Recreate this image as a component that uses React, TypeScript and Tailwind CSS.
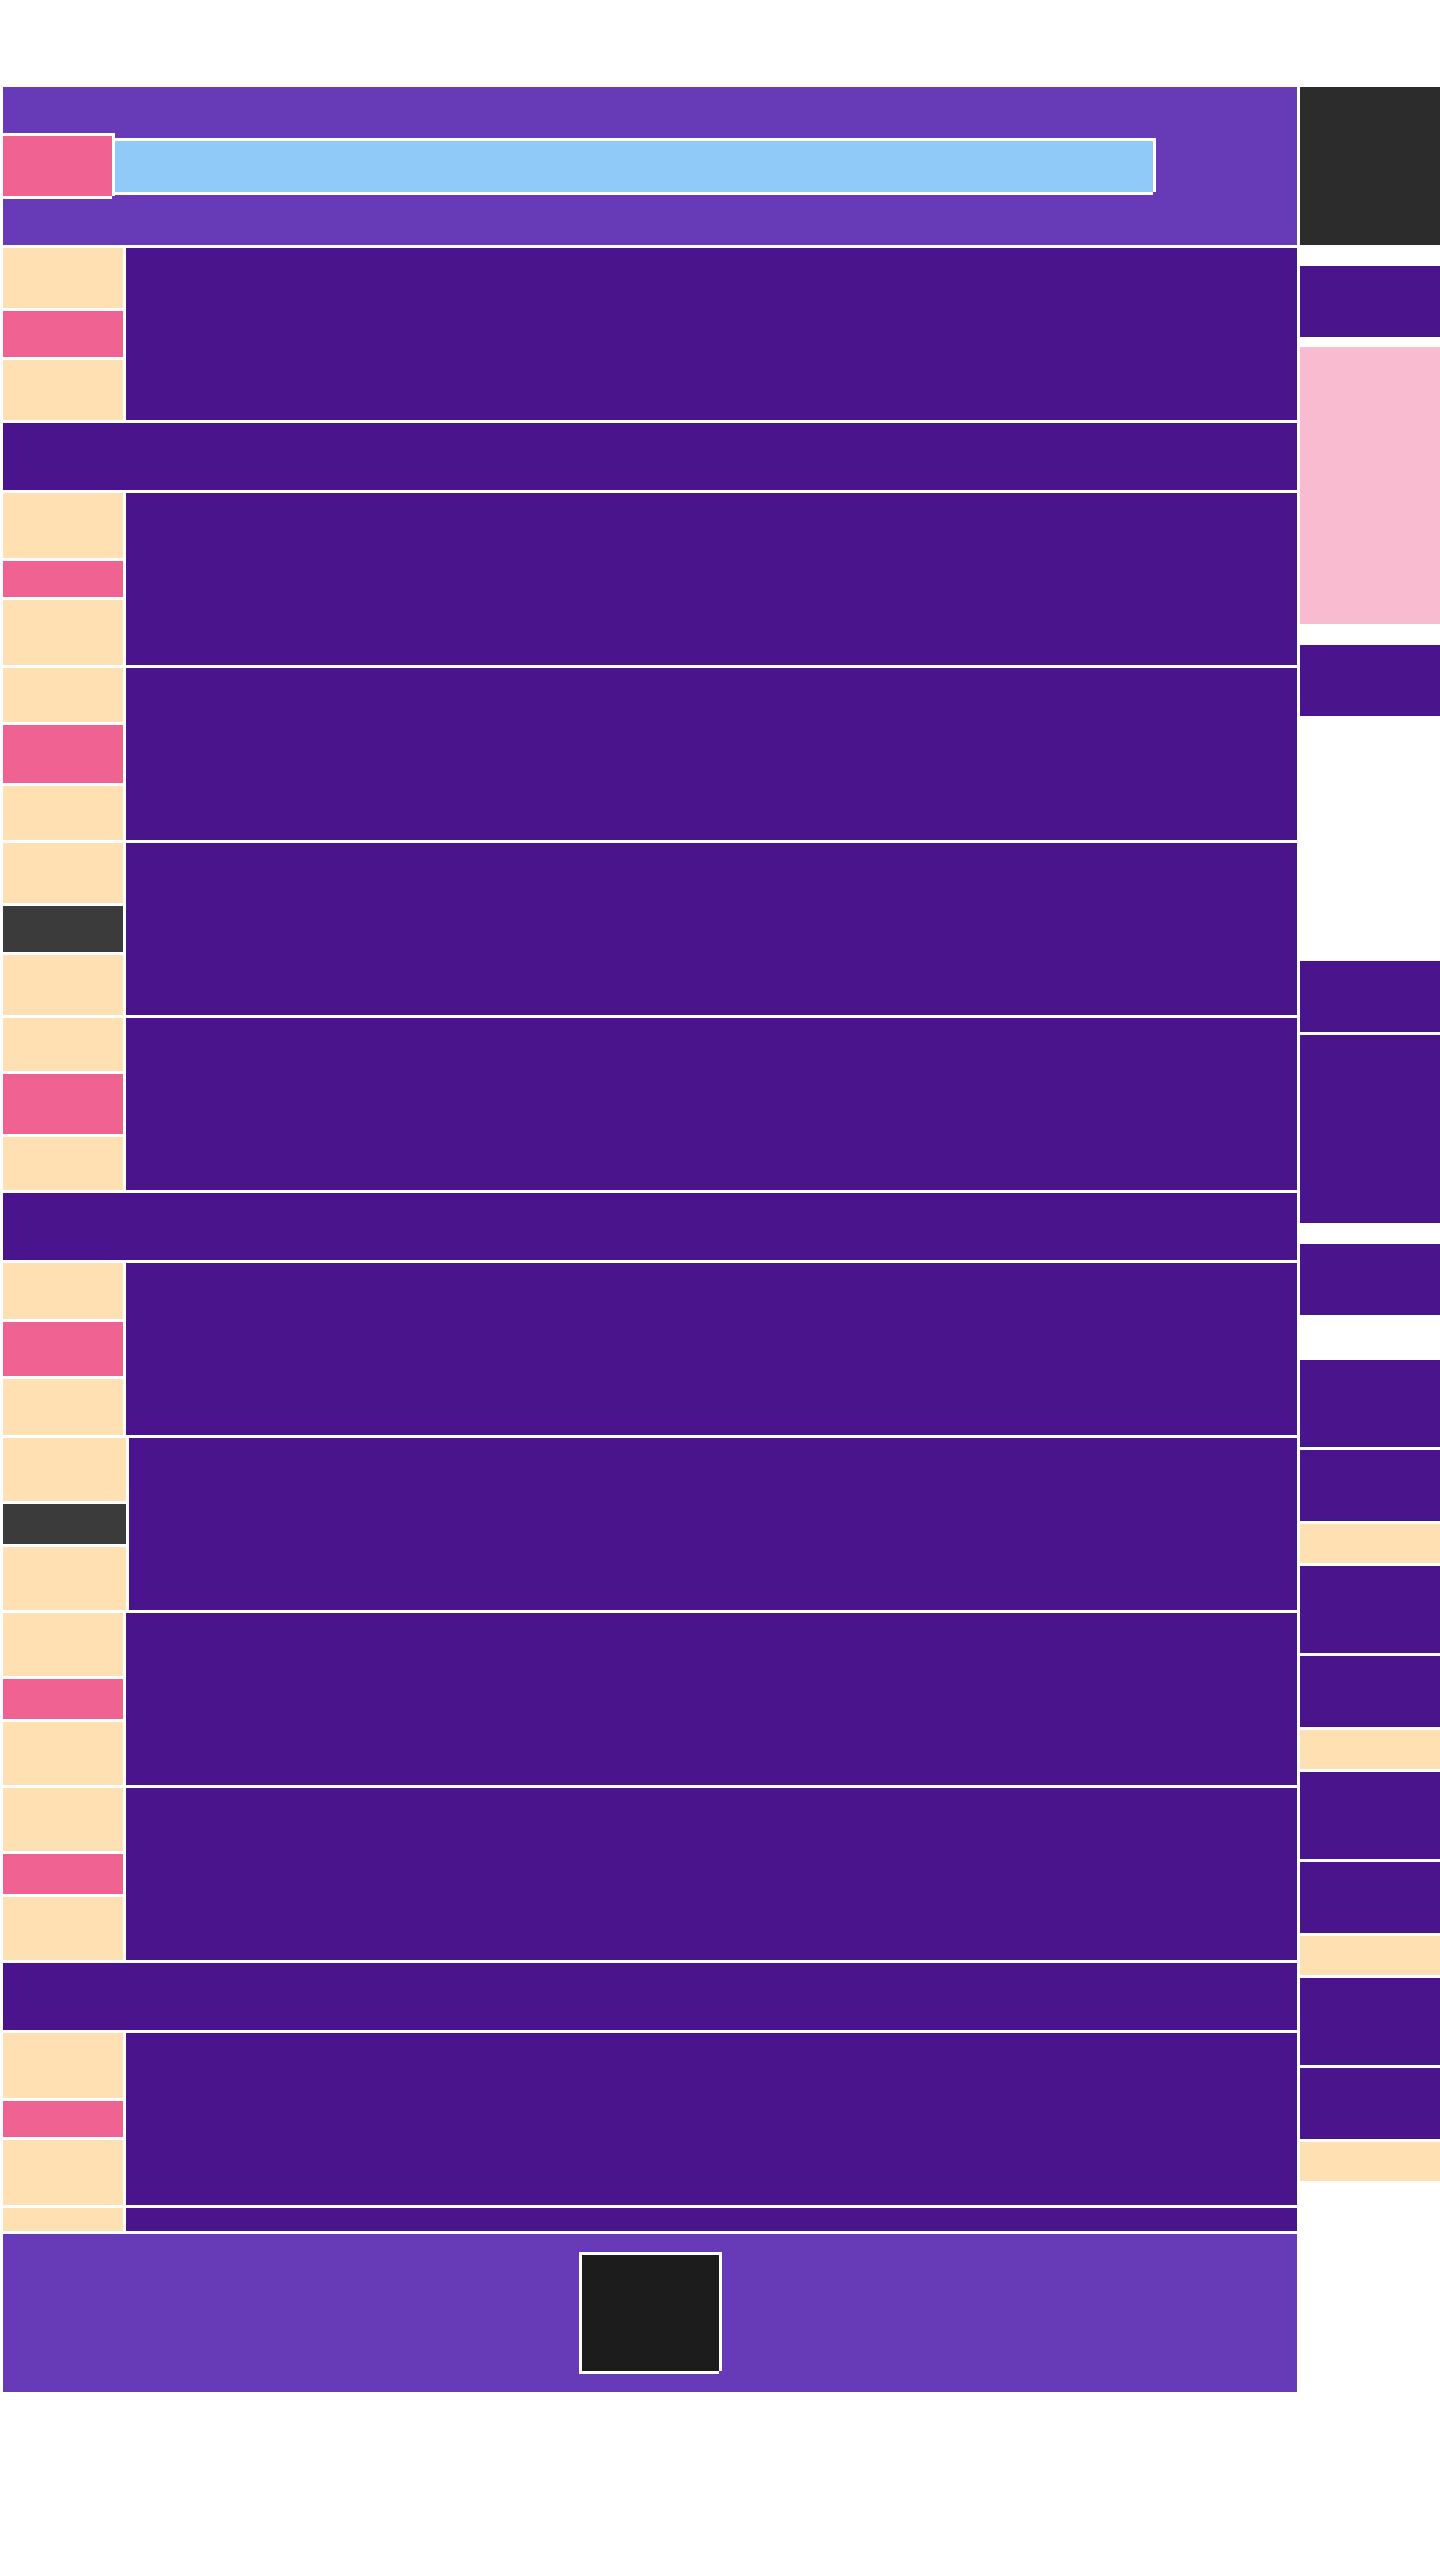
const ring =
  "shadow-[-3px_-3px_0_#fff,3px_-3px_0_#fff,-3px_3px_0_#fff,3px_0_0_#fff,0_3px_0_#fff]";

type RowData =
  | { kind: "row"; mid: string; wide?: boolean }
  | { kind: "bar" }
  | { kind: "short" };

const rows: RowData[] = [
  { kind: "row", mid: "h-[46px] bg-[#F06292]" },
  { kind: "bar" },
  { kind: "row", mid: "h-[36px] bg-[#F06292]" },
  { kind: "row", mid: "h-[58px] bg-[#F06292]" },
  { kind: "row", mid: "h-[46px] bg-[#3B3B3B]" },
  { kind: "row", mid: "h-[60px] bg-[#F06292]" },
  { kind: "bar" },
  { kind: "row", mid: "h-[54px] bg-[#F06292]" },
  { kind: "row", mid: "h-[40px] bg-[#3B3B3B]", wide: true },
  { kind: "row", mid: "h-[40px] bg-[#F06292]" },
  { kind: "row", mid: "h-[40px] bg-[#F06292]" },
  { kind: "bar" },
  { kind: "row", mid: "h-[36px] bg-[#F06292]" },
  { kind: "short" },
];

const Row = ({ mid, wide }: { mid: string; wide?: boolean }) => (
  <div className="flex h-[172px] gap-[3px]">
    <div
      className={
        wide
          ? "flex w-[123px] shrink-0 flex-col gap-[3px]"
          : "flex w-[120px] shrink-0 flex-col gap-[3px]"
      }
    >
      <div className="flex-1 bg-[#FFE0B2]" />
      <div className={mid} />
      <div className="flex-1 bg-[#FFE0B2]" />
    </div>
    <div className="flex-1 bg-[#4A148C]" />
  </div>
);

const SideGroup = () => (
  <>
    <div className="h-[87px] bg-[#4A148C]" />
    <div className="h-[71px] bg-[#4A148C]" />
    <div className="h-[39px] bg-[#FFE0B2]" />
  </>
);

export default function App() {
  return (
    <div className="min-h-[2560px] bg-white pl-[3px] pt-[87px]">
      <div className="flex items-start gap-[3px]">
        {/* main column */}
        <div className="flex w-[1294px] shrink-0 flex-col gap-[3px]">
          <header className="flex h-[158px] items-center gap-[3px] bg-[#673AB7]">
            <div className={`h-[60px] w-[109px] bg-[#F06292] ${ring}`} />
            <div className={`h-[51px] w-[1038px] bg-[#90CAF9] ${ring}`} />
          </header>

          {rows.map((r, i) => {
            if (r.kind === "bar")
              return <div key={i} className="h-[67px] bg-[#4A148C]" />;
            if (r.kind === "short")
              return (
                <div key={i} className="flex h-[23px] gap-[3px]">
                  <div className="w-[120px] shrink-0 bg-[#FFE0B2]" />
                  <div className="flex-1 bg-[#4A148C]" />
                </div>
              );
            return <Row key={i} mid={r.mid} wide={r.wide} />;
          })}

          <footer className="flex h-[158px] items-center justify-center bg-[#673AB7]">
            <div className={`h-[116px] w-[137px] bg-[#1C1C1C] ${ring}`} />
          </footer>
        </div>

        {/* right column */}
        <aside className="flex w-[140px] shrink-0 flex-col">
          <div className="h-[158px] bg-[#2C2C2C]" />
          <div className="mt-[21px] h-[71px] bg-[#4A148C]" />
          <div className="mt-[10px] h-[277px] bg-[#F8BBD0]" />
          <div className="mt-[21px] h-[71px] bg-[#4A148C]" />
          <div className="mt-[245px] h-[71px] bg-[#4A148C]" />
          <div className="mt-[3px] h-[188px] bg-[#4A148C]" />
          <div className="mt-[21px] h-[71px] bg-[#4A148C]" />
          <div className="mt-[45px] flex flex-col gap-[3px]">
            <SideGroup />
            <SideGroup />
            <SideGroup />
            <SideGroup />
          </div>
        </aside>
      </div>
    </div>
  );
}
